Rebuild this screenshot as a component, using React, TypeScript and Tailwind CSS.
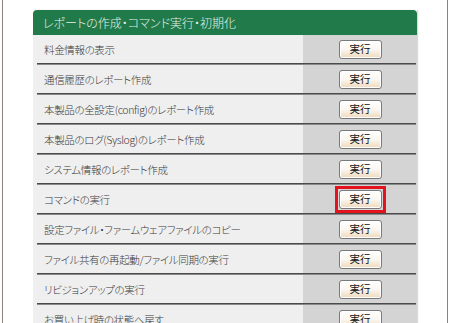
import React from 'react';

const rows = [
  '料金情報の表示',
  '通信履歴のレポート作成',
  '本製品の全設定(config)のレポート作成',
  '本製品のログ(Syslog)のレポート作成',
  'システム情報のレポート作成',
  'コマンドの実行',
  '設定ファイル・ファームウェアファイルのコピー',
  'ファイル共有の再起動/ファイル同期の実行',
  'リビジョンアップの実行',
  'お買い上げ時の状態へ戻す',
];

const RunButton: React.FC<{ highlight?: boolean }> = ({ highlight }) => (
  <span className={`p-[1px] border-[3px] ${highlight ? 'border-[#e3121c]' : 'border-transparent'}`}>
    <button className="block w-[43px] h-[19px] rounded-[3px] border border-[#7a7a7a] bg-gradient-to-b from-white via-[#fbf6ef] to-[#efd9bb] text-[10.5px] leading-none text-[#111] shadow-[inset_0_0_0_1px_#ffffff]">
      実行
    </button>
  </span>
);

export default function App() {
  return (
    <div
      className="h-[323px] w-[450px] overflow-hidden bg-white [font-feature-settings:'palt']"
      style={{ fontFamily: '"Noto Sans CJK JP", "Noto Sans", sans-serif' }}
    >
      <div className="ml-[2px] w-[446px] h-full border-x border-[#8c817b] pt-[10px] pl-[30px]">
        <div className="w-[384px] shadow-[1px_0_1px_rgba(0,0,0,0.15)]">
          <div className="h-[25px] rounded-t-[4px] bg-[#217a49] pl-[10px] flex items-center text-[12px] font-light text-[#e4f1e8]">
            レポートの作成・コマンド実行・初期化
          </div>
          {rows.map((label, i) => (
            <div key={label}>
              <div className="h-[28px] flex">
                <div className="flex-1 bg-[#efefef] pl-[11px] pt-[1px] flex items-center text-[10.5px] tracking-[-0.35px] font-light text-[#3a3a3a]">
                  {label}
                </div>
                <div className="w-[114px] bg-[#d4d4d4] flex items-center justify-center">
                  <RunButton highlight={i === 5} />
                </div>
              </div>
              <div className="h-[2px] flex">
                <div className="w-[4px] bg-[#efefef]" />
                <div className="flex-1 bg-[#4a4a4a] border-b border-[#8a8a8a]" />
                <div className="w-[1px] bg-[#d4d4d4]" />
              </div>
            </div>
          ))}
        </div>
      </div>
    </div>
  );
}
